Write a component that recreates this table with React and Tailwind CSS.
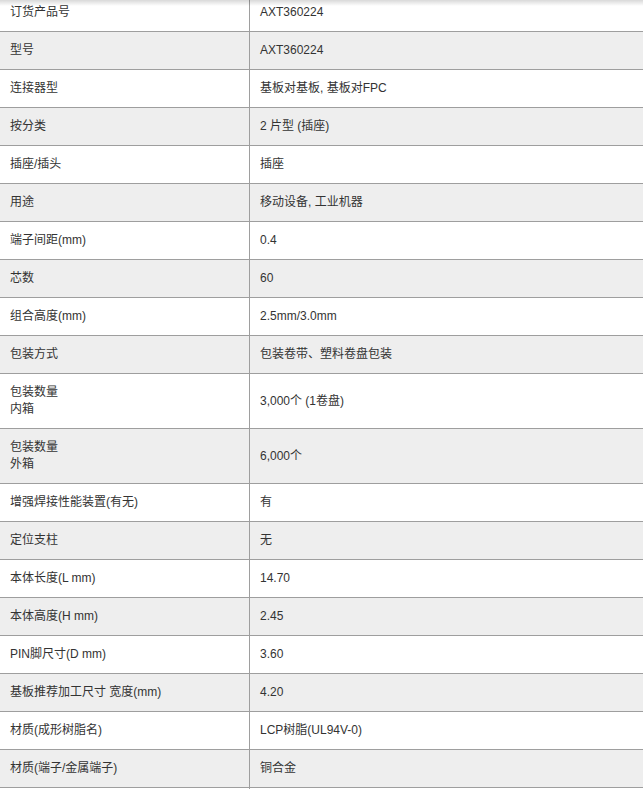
import React from "react";

const rows = [
  ["订货产品号", "AXT360224"],
  ["型号", "AXT360224"],
  ["连接器型", "基板对基板, 基板对FPC"],
  ["按分类", "2 片型 (插座)"],
  ["插座/插头", "插座"],
  ["用途", "移动设备, 工业机器"],
  ["端子间距(mm)", "0.4"],
  ["芯数", "60"],
  ["组合高度(mm)", "2.5mm/3.0mm"],
  ["包装方式", "包装卷带、塑料卷盘包装"],
  [["包装数量", "内箱"], "3,000个 (1卷盘)"],
  [["包装数量", "外箱"], "6,000个"],
  ["增强焊接性能装置(有无)", "有"],
  ["定位支柱", "无"],
  ["本体长度(L mm)", "14.70"],
  ["本体高度(H mm)", "2.45"],
  ["PIN脚尺寸(D mm)", "3.60"],
  ["基板推荐加工尺寸 宽度(mm)", "4.20"],
  ["材质(成形树脂名)", "LCP树脂(UL94V-0)"],
  ["材质(端子/金属端子)", "铜合金"],
  ["", ""],
];

export default function App() {
  return (
    <div
      className="relative h-[789px] overflow-hidden bg-white text-[12px] leading-[17px] text-[#333]"
      style={{ fontFamily: '"Liberation Sans", "Noto Sans CJK SC", sans-serif' }}
    >
      {/* shadow from the header above */}
      <div className="pointer-events-none absolute left-0 right-0 top-0 z-10 h-[6px] bg-gradient-to-b from-black/15 to-transparent" />

      <div className="-mt-[6px]">
        {rows.map(([label, value], i) => (
          <div
            key={i}
            className={`flex min-h-[38px] border-b border-[#9e9e9e] ${
              i % 2 === 1 ? "bg-[#eeeeee]" : "bg-white"
            }`}
          >
            <div className="w-[250px] shrink-0 border-r border-[#9e9e9e] px-[10px] py-[10px]">
              {Array.isArray(label)
                ? label.map((l) => <div key={l}>{l}</div>)
                : label}
            </div>
            <div className="flex flex-1 items-center px-[10px] py-[10px]">
              {value}
            </div>
          </div>
        ))}
      </div>
    </div>
  );
}
